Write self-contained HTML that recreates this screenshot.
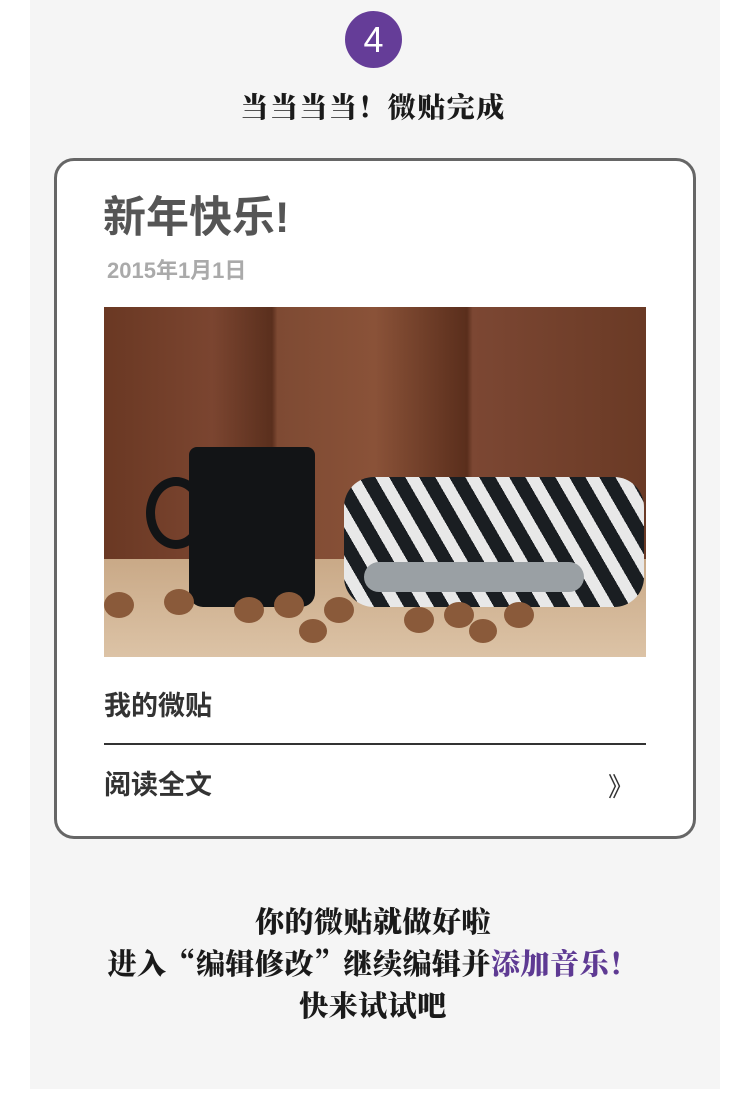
<!DOCTYPE html>
<html><head><meta charset="utf-8"><style>
*{margin:0;padding:0;box-sizing:border-box}
body{width:746px;height:1103px;background:#fff;position:relative;overflow:hidden;font-family:"Liberation Sans","Noto Sans CJK SC",sans-serif}
.panel{position:absolute;left:30px;top:0;width:690px;height:1089px;background:#f5f5f5}
.circle{position:absolute;left:345px;top:11px;width:57px;height:57px;border-radius:50%;background:#653d98;color:#fff;font-size:36px;text-align:center;line-height:57px;font-family:"Liberation Sans",sans-serif}
.serif{font-family:"Noto Serif CJK SC",serif;font-weight:900;color:#1a1a1a;text-align:center;position:absolute;left:0;width:746px}
.card{position:absolute;left:54px;top:158px;width:642px;height:681px;border:3px solid #666;border-radius:20px;background:#fff}
.abs{position:absolute}
</style></head><body>
<div class="panel"></div>
<div class="circle">4</div>
<div class="serif" style="top:88px;font-size:28px;line-height:36px;letter-spacing:1.5px">当当当当！微贴完成</div>
<div class="card"></div>
<div class="abs" style="left:103px;top:192px;font-size:43px;font-weight:bold;color:#555;line-height:52px">新年快乐!</div>
<div class="abs" style="left:107px;top:257px;font-size:22px;font-weight:bold;color:#aaa;line-height:28px">2015年1月1日</div>
<div class="abs" style="left:104px;top:307px;width:542px;height:350px;overflow:hidden;background:#6b3a22">
  <div class="abs" style="left:0;top:0;width:542px;height:252px;background:linear-gradient(90deg,#6a3823,#7b4530 20%,#5a2f1d 31%,#7e4a33 32%,#8a5238 50%,#5a2e1c 67%,#7c4733 68%,#6a3a25)"></div>
  <div class="abs" style="left:0;top:252px;width:542px;height:98px;background:linear-gradient(#c9a987,#dcc3a6)"></div>
  <div class="abs" style="left:85px;top:140px;width:126px;height:160px;background:#121416;border-radius:8px 8px 14px 14px"></div>
  <div class="abs" style="left:42px;top:170px;width:60px;height:72px;border:9px solid #121416;border-radius:50%"></div>
  <div class="abs" style="left:240px;top:170px;width:300px;height:130px;border-radius:30px;background:repeating-linear-gradient(60deg,#1a1e22 0 14px,#e8e8e8 14px 26px)"></div>
  <div class="abs" style="left:260px;top:255px;width:220px;height:30px;border-radius:15px;background:#9aa0a4"></div>
  <div class="abs" style="left:130px;top:290px;width:30px;height:26px;border-radius:50%;background:#8a5a3a"></div>
  <div class="abs" style="left:170px;top:285px;width:30px;height:26px;border-radius:50%;background:#8a5a3a"></div>
  <div class="abs" style="left:220px;top:290px;width:30px;height:26px;border-radius:50%;background:#8a5a3a"></div>
  <div class="abs" style="left:300px;top:300px;width:30px;height:26px;border-radius:50%;background:#8a5a3a"></div>
  <div class="abs" style="left:340px;top:295px;width:30px;height:26px;border-radius:50%;background:#8a5a3a"></div>
  <div class="abs" style="left:400px;top:295px;width:30px;height:26px;border-radius:50%;background:#8a5a3a"></div>
  <div class="abs" style="left:60px;top:282px;width:30px;height:26px;border-radius:50%;background:#8a5a3a"></div>
  <div class="abs" style="left:0;top:285px;width:30px;height:26px;border-radius:50%;background:#8a5a3a"></div>
  <div class="abs" style="left:195px;top:312px;width:28px;height:24px;border-radius:50%;background:#8a5a3a"></div>
  <div class="abs" style="left:365px;top:312px;width:28px;height:24px;border-radius:50%;background:#8a5a3a"></div>
</div>
<div class="abs" style="left:104px;top:689px;font-size:27px;font-weight:bold;color:#333;line-height:34px">我的微贴</div>
<div class="abs" style="left:104px;top:743px;width:542px;height:2px;background:#333"></div>
<div class="abs" style="left:104px;top:768px;font-size:27px;font-weight:bold;color:#333;line-height:34px">阅读全文</div>
<div class="abs" style="left:608px;top:770px;font-size:26px;color:#333;line-height:32px;font-family:'Noto Sans CJK SC',sans-serif">》</div>
<div class="serif" style="top:900px;font-size:29px;line-height:42px;letter-spacing:0.5px">你的微贴就做好啦<br>进入“编辑修改”继续编辑并<span style="color:#5e3a93">添加音乐！</span><br>快来试试吧</div>
</body></html>
